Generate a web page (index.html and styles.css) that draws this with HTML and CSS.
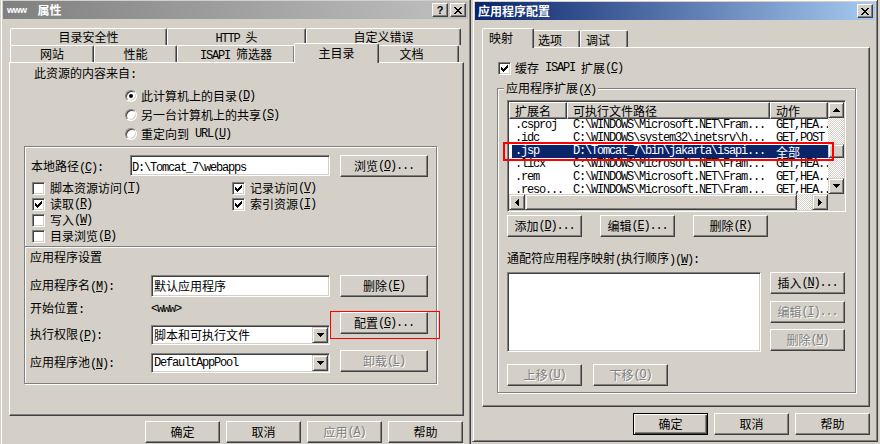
FILE: index.html
```html
<!DOCTYPE html>
<html lang="zh-CN">
<head>
<meta charset="utf-8">
<title>属性 / 应用程序配置</title>
<link rel="stylesheet" href="styles.css">
</head>
<body>
<div class="desk">

  <section class="win win-l">
    <header class="title title-off">
      <span class="ttext"><span class="www">www</span>属性</span>
      <span class="tbtns">
        <span class="cap">?</span>
        <span class="cap"><svg width="8" height="7" viewBox="0 0 8 7"><path d="M0 0h2v1h1v1h2V1h1V0h2v1H7v1H6v1H5v1h1v1h1v1h1v1H6V6H5V5H3v1H2v1H0V6h1V5h1V4h1V3H2V2H1V1H0z"/></svg></span>
      </span>
    </header>

    <div class="tabs tabs-l">
      <div class="trow">
        <div class="tab t-sec">目录安全性</div>
        <div class="tab t-http"><span class="m">HTTP </span>头</div>
        <div class="tab t-err">自定义错误</div>
      </div>
      <div class="trow">
        <div class="tab t-site">网站</div>
        <div class="tab t-perf">性能</div>
        <div class="tab t-isapi"><span class="m">ISAPI </span>筛选器</div>
        <div class="tab tab-on t-home">主目录</div>
        <div class="tab t-doc">文档</div>
      </div>
    </div>

    <div class="panel panel-l">
      <div class="src-title">此资源的内容来自<span class="m">:</span></div>
      <div class="radios">
        <div class="radio-row"><span class="radio on"></span>此计算机上的目录<span class="m">(<u>D</u>)</span></div>
        <div class="radio-row"><span class="radio"></span>另一台计算机上的共享<span class="m">(<u>S</u>)</span></div>
        <div class="radio-row"><span class="radio"></span>重定向到<span class="m"> URL(<u>U</u>)</span></div>
      </div>

      <div class="frame frame-l">
        <div class="path-row">
          <span class="lbl-path">本地路径<span class="m">(<u>C</u>):</span></span>
          <span class="field tb-path"><span class="m">D:\Tomcat_7\webapps</span></span>
          <span class="btn btn-wide">浏览<span class="m">(<u>O</u>)...</span></span>
        </div>

        <div class="checks">
          <div class="chk"><span class="cb"></span>脚本资源访问<span class="m">(<u>T</u>)</span></div>
          <div class="chk"><span class="cb"><svg width="9" height="9" viewBox="0 0 9 9"><path d="M1 3h1v1h1v1h1V4h1V3h1V2h1V1h1v3H7v1H6v1H5v1H4v1H3V7H2V6H1z"/></svg></span>记录访问<span class="m">(<u>V</u>)</span></div>
          <div class="chk"><span class="cb"><svg width="9" height="9" viewBox="0 0 9 9"><path d="M1 3h1v1h1v1h1V4h1V3h1V2h1V1h1v3H7v1H6v1H5v1H4v1H3V7H2V6H1z"/></svg></span>读取<span class="m">(<u>R</u>)</span></div>
          <div class="chk"><span class="cb"><svg width="9" height="9" viewBox="0 0 9 9"><path d="M1 3h1v1h1v1h1V4h1V3h1V2h1V1h1v3H7v1H6v1H5v1H4v1H3V7H2V6H1z"/></svg></span>索引资源<span class="m">(<u>I</u>)</span></div>
          <div class="chk"><span class="cb"></span>写入<span class="m">(<u>W</u>)</span></div>
          <div></div>
          <div class="chk"><span class="cb"></span>目录浏览<span class="m">(<u>B</u>)</span></div>
        </div>

        <div class="sep"></div>
        <div class="sect">应用程序设置</div>

        <div class="app">
          <div class="app-l">
            <div class="arow r1"><span class="alb">应用程序名<span class="m">(<u>M</u>):</span></span><span class="field tb-app"><span class="ftxt">默认应用程序</span></span></div>
            <div class="arow r2"><span class="alb">开始位置<span class="m">:</span></span><span class="m">&lt;www&gt;</span></div>
            <div class="arow r3"><span class="alb">执行权限<span class="m">(<u>P</u>):</span></span><span class="field combo"><span class="ftxt">脚本和可执行文件</span><span class="dd"><svg width="7" height="4" viewBox="0 0 7 4"><path d="M0 0h7v1H6v1H5v1H4v1H3V3H2V2H1V1H0z"/></svg></span></span></div>
            <div class="arow r4"><span class="alb">应用程序池<span class="m">(<u>N</u>):</span></span><span class="field combo"><span class="ftxt m">DefaultAppPool</span><span class="dd"><svg width="7" height="4" viewBox="0 0 7 4"><path d="M0 0h7v1H6v1H5v1H4v1H3V3H2V2H1V1H0z"/></svg></span></span></div>
          </div>
          <div class="app-r">
            <span class="btn btn-wide">删除<span class="m">(<u>E</u>)</span></span>
            <span class="btn btn-wide hl b-cfg">配置<span class="m">(<u>G</u>)...</span></span>
            <span class="btn btn-wide off b-unl">卸载<span class="m">(<u>L</u>)</span></span>
          </div>
        </div>
      </div>
    </div>

    <div class="dlg-btns">
      <span class="btn">确定</span>
      <span class="btn">取消</span>
      <span class="btn off">应用<span class="m">(<u>A</u>)</span></span>
      <span class="btn">帮助</span>
    </div>
  </section>

  <section class="win win-r">
    <header class="title title-on">
      <span class="ttext">应用程序配置</span>
      <span class="tbtns">
        <span class="cap"><svg width="8" height="7" viewBox="0 0 8 7"><path d="M0 0h2v1h1v1h2V1h1V0h2v1H7v1H6v1H5v1h1v1h1v1h1v1H6V6H5V5H3v1H2v1H0V6h1V5h1V4h1V3H2V2H1V1H0z"/></svg></span>
      </span>
    </header>

    <div class="tabs tabs-r">
      <div class="trow">
        <div class="tab tab-on">映射</div>
        <div class="tab">选项</div>
        <div class="tab">调试</div>
      </div>
    </div>

    <div class="panel panel-r">
      <div class="chk chk-cache"><span class="cb"><svg width="9" height="9" viewBox="0 0 9 9"><path d="M1 3h1v1h1v1h1V4h1V3h1V2h1V1h1v3H7v1H6v1H5v1H4v1H3V7H2V6H1z"/></svg></span>缓存<span class="m"> ISAPI </span>扩展<span class="m">(<u>C</u>)</span></div>

      <div class="frame frame-r">
        <span class="legend">应用程序扩展<span class="m">(<u>X</u>)</span></span>

        <div class="lv">
          <div class="lv-main">
            <div class="lv-head">
              <span class="hc w1">扩展名</span><span class="hc w2">可执行文件路径</span><span class="hc w3">动作</span>
            </div>
            <div class="lv-row m"><span class="w1">.csproj</span><span class="w2">C:\WINDOWS\Microsoft.NET\Fram...</span><span class="w3">GET,HEA...</span></div>
            <div class="lv-row m"><span class="w1">.idc</span><span class="w2">C:\WINDOWS\system32\inetsrv\h...</span><span class="w3">GET,POST</span></div>
            <div class="lv-row m sel"><span class="w1">.jsp</span><span class="w2">D:\Tomcat_7\bin\jakarta\isapi...</span><span class="w3 cjk">全部</span></div>
            <div class="lv-row m"><span class="w1">.licx</span><span class="w2">C:\WINDOWS\Microsoft.NET\Fram...</span><span class="w3">GET,HEA...</span></div>
            <div class="lv-row m"><span class="w1">.rem</span><span class="w2">C:\WINDOWS\Microsoft.NET\Fram...</span><span class="w3">GET,HEA...</span></div>
            <div class="lv-row m"><span class="w1">.reso...</span><span class="w2">C:\WINDOWS\Microsoft.NET\Fram...</span><span class="w3">GET,HEA...</span></div>
          </div>
          <div class="vs">
            <span class="sbtn"><svg width="7" height="4" viewBox="0 0 7 4"><path d="M3 0h1v1h1v1h1v1h1v1H0V3h1V2h1V1h1z"/></svg></span>
            <span class="track vt1"></span>
            <span class="sbtn thumb-v"></span>
            <span class="track vt2"></span>
            <span class="sbtn"><svg width="7" height="4" viewBox="0 0 7 4"><path d="M0 0h7v1H6v1H5v1H4v1H3V3H2V2H1V1H0z"/></svg></span>
          </div>
          <div class="hs">
            <span class="sbtn"><svg width="4" height="7" viewBox="0 0 4 7"><path d="M3 0h1v7H3V6H2V5H1V4H0V3h1V2h1V1h1z"/></svg></span>
            <span class="sbtn thumb-h"></span>
            <span class="track ht"></span>
            <span class="sbtn"><svg width="4" height="7" viewBox="0 0 4 7"><path d="M0 0h1v1h1v1h1v1h1v1H3v1H2v1H1v1H0z"/></svg></span>
          </div>
          <div class="corner"></div>
          <div class="mark"></div>
        </div>

        <div class="ext-btns">
          <span class="btn">添加<span class="m">(<u>D</u>)...</span></span>
          <span class="btn">编辑<span class="m">(<u>E</u>)...</span></span>
          <span class="btn">删除<span class="m">(<u>R</u>)</span></span>
        </div>

        <div class="wc-label">通配符应用程序映射<span class="m">(</span>执行顺序<span class="m">)(<u>W</u>):</span></div>
        <div class="wc">
          <div class="field wc-list"></div>
          <div class="wc-btns">
            <span class="btn">插入<span class="m">(<u>N</u>)...</span></span>
            <span class="btn off">编辑<span class="m">(<u>I</u>)...</span></span>
            <span class="btn off">删除<span class="m">(<u>M</u>)</span></span>
          </div>
        </div>

        <div class="move-btns">
          <span class="btn off">上移<span class="m">(<u>U</u>)</span></span>
          <span class="btn off">下移<span class="m">(<u>O</u>)</span></span>
        </div>
      </div>
    </div>

    <div class="dlg-btns">
      <span class="btn def">确定</span>
      <span class="btn">取消</span>
      <span class="btn">帮助</span>
    </div>
  </section>

</div>
</body>
</html>
```

FILE: styles.css
```css
* { box-sizing: border-box; }
html, body { margin: 0; padding: 0; }
body {
  width: 880px; height: 444px; overflow: hidden;
  background: #d4d0c8; color: #000;
  font: 12px/14px "Noto Sans CJK SC", "Noto Sans", sans-serif;
}
u { text-decoration: underline; text-underline-offset: 1px; }
.m { font-family: "Liberation Mono", "DejaVu Sans Mono", monospace; font-size: 12px; letter-spacing: -1.2px; white-space: pre; }
.cjk { font-family: "Noto Sans CJK SC", sans-serif; font-size: 12px; letter-spacing: 0; }
svg { display: block; fill: #000; shape-rendering: crispEdges; }

.desk { display: flex; align-items: flex-start; gap: 1px; }

/* window frame */
.win {
  flex: none; background: #d4d0c8; padding: 2px;
  border: 1px solid; border-color: #d4d0c8 #404040 #404040 #d4d0c8;
  box-shadow: inset 1px 1px #fff, inset -1px -1px #808080;
}
.win-l { width: 471px; height: 452px; margin-top: -2px; }
.win-r { width: 406px; height: 443px; margin-top: -1px; }

.title {
  height: 18px; display: flex; align-items: center; justify-content: space-between;
  padding: 0 2px 0 3px; color: #fff; font-weight: 700;
}
.title-off { background: linear-gradient(90deg, #808080, #c0c0c0); }
.title-on { background: linear-gradient(90deg, #0a246a, #a6caf0); }
.ttext { display: flex; align-items: center; }
.www { font: bold 9px/1 "Liberation Sans", sans-serif; letter-spacing: -0.5px; margin: 1px 11px 0 1px; }
.tbtns { display: flex; gap: 2px; }
.cap {
  width: 16px; height: 14px; display: flex; align-items: center; justify-content: center;
  background: #d4d0c8; color: #000; font: bold 11px/1 "Liberation Sans", sans-serif;
  border: 1px solid; border-color: #fff #404040 #404040 #fff; box-shadow: inset -1px -1px #808080;
}

/* tabs */
.tabs-l { padding: 9px 0 0 7px; }
.tabs-r { padding: 10px 0 0 9px; }
.trow { display: flex; height: 17px; }
.tab {
  flex: none; height: 17px; padding-top: 1px; text-align: center; white-space: nowrap;
  background: #d4d0c8; border: 1px solid; border-bottom: 0;
  border-color: #fff #404040 transparent #fff; border-radius: 2px 2px 0 0;
  box-shadow: inset -1px 0 #808080;
}
.tab-on { height: 20px; margin: -2px -1px 0; padding-top: 2px; position: relative; z-index: 1; }
.t-sec { width: 157px; } .t-http { width: 139px; } .t-err { width: 155px; }
.t-site { width: 84px; } .t-perf { width: 83px; } .t-isapi { width: 118px; }
.t-home { width: 85px; } .t-doc { width: 81px; padding-right: 14px; }
.tabs-r .tab { width: 48px; text-align: left; padding: 2px 0 0 5px; }
.tabs-r .tab-on { width: 52px; margin: -2px -2px 0; padding-left: 6px; }

/* panels */
.panel {
  border: 1px solid; border-color: #fff #404040 #404040 #fff;
  box-shadow: inset -1px -1px #808080;
}
.panel-l { width: 455px; height: 354px; margin-left: 6px; }
.panel-r { width: 388px; height: 360px; margin-left: 7px; }

.src-title { margin: 3px 0 0 24px; }
.radios { margin: 4px 0 0 115px; }
.radio-row { height: 19px; display: flex; align-items: center; white-space: nowrap; }
.radio {
  flex: none; width: 12px; height: 12px; border-radius: 50%; background: #fff; margin-right: 4px;
  border: 1px solid; border-color: #808080 #fff #fff #808080;
  box-shadow: inset 1px 1px #404040, inset -1px -1px #d4d0c8;
  display: flex; align-items: center; justify-content: center;
}
.radio.on::after { content: ""; width: 4px; height: 4px; border-radius: 50%; background: #000; }

/* etched frames */
.frame { border: 1px solid #808080; box-shadow: inset 1px 1px #fff, 1px 1px #fff; }
.frame-l { width: 413px; height: 238px; margin: 3px 0 0 14px; padding: 8px 0 0 6px; }
.frame-r { width: 359px; height: 305px; margin: 13px 0 0 14px; }

/* fields */
.field {
  display: block; background: #fff; padding: 1px;
  border: 1px solid; border-color: #808080 #fff #fff #808080;
  box-shadow: inset 1px 1px #404040, inset -1px -1px #d4d0c8;
}
.ftxt { padding-left: 1px; white-space: nowrap; }

.path-row { display: flex; align-items: flex-start; height: 22px; }
.lbl-path { width: 99px; line-height: 22px; }
.tb-path { width: 200px; height: 21px; line-height: 17px; }
.path-row .btn { margin-left: 10px; }

.checks { display: grid; grid-template-columns: 200px 200px; grid-auto-rows: 16px; margin: 3px 0 0 1px; }
.chk { display: flex; align-items: center; white-space: nowrap; }
.cb {
  flex: none; width: 13px; height: 13px; padding: 1px; background: #fff; margin-right: 5px;
  border: 1px solid; border-color: #808080 #fff #fff #808080;
  box-shadow: inset 1px 1px #404040, inset -1px -1px #d4d0c8;
}

.sep { width: 411px; height: 2px; margin: 2px 0 0 -6px; border-top: 1px solid #808080; border-bottom: 1px solid #fff; }
.sect { margin: 2px 0 0 -1px; }

.app { display: flex; margin: 11px 0 0 -1px; }
.app-l { width: 300px; display: flex; flex-direction: column; }
.arow { display: flex; align-items: center; height: 20px; }
.alb { width: 121px; flex: none; white-space: nowrap; }
.r1 { height: 22px; }
.r2 { margin-top: 2px; }
.r3 { margin-top: 6px; }
.r4 { margin-top: 8px; }
.tb-app { width: 179px; height: 22px; line-height: 17px; }
.combo { width: 179px; height: 20px; display: flex; align-items: center; }
.dd {
  margin-left: auto; width: 16px; height: 16px; display: flex; align-items: center; justify-content: center;
  background: #d4d0c8; border: 1px solid; border-color: #d4d0c8 #404040 #404040 #d4d0c8;
  box-shadow: inset 1px 1px #fff, inset -1px -1px #808080;
}
.app-r { display: flex; flex-direction: column; margin-left: 10px; }
.b-cfg { margin-top: 15px; }
.b-unl { margin-top: 16px; }

/* buttons */
.btn {
  flex: none; width: 75px; height: 22px; display: flex; align-items: center; justify-content: center;
  white-space: nowrap; background: #d4d0c8;
  border: 1px solid; border-color: #fff #404040 #404040 #fff;
  box-shadow: inset -1px -1px #808080;
}
.btn-wide { width: 88px; }
.btn.off { color: #808080; text-shadow: 1px 1px #fff; }
.btn.def { border-color: #000; box-shadow: inset 1px 1px #fff, inset -1px -1px #404040, inset -2px -2px #808080; }
.hl { position: relative; }
.hl::after { content: ""; position: absolute; left: -11px; top: -2px; width: 108px; height: 26px; border: 1px solid #f00; }

.dlg-btns { display: flex; justify-content: flex-end; gap: 6px; margin-top: 5px; padding-right: 5px; }
.win-r .dlg-btns { margin-top: 6px; }

/* right dialog */
.chk-cache { height: 14px; margin: 13px 0 0 15px; }
.chk-cache .cb { margin-right: 4px; }
.legend { display: block; width: max-content; margin: -8px 0 0 6px; padding: 0 2px; background: #d4d0c8; }

.lv {
  position: relative; width: 339px; height: 112px; margin: 3px 0 0 9px; padding: 1px;
  display: grid; grid-template-columns: 319px 16px; grid-template-rows: 92px 16px;
  background: #fff; border: 1px solid; border-color: #808080 #fff #fff #808080;
  box-shadow: inset 1px 1px #404040, inset -1px -1px #d4d0c8;
}
.lv-main { overflow: hidden; }
.lv-head { display: flex; height: 17px; }
.hc {
  flex: none; height: 17px; padding: 1px 0 0 5px; white-space: nowrap; overflow: hidden;
  background: #d4d0c8; border: 1px solid; border-color: #fff #404040 #404040 #fff;
  box-shadow: inset -1px -1px #808080;
}
.w1 { width: 58px; } .w2 { width: 203px; } .w3 { width: 58px; }
.lv-row { display: flex; height: 13px; line-height: 13px; white-space: nowrap; }
.lv-row span { flex: none; overflow: hidden; padding-left: 6px; }
.lv-row.sel { color: #fff; background: linear-gradient(90deg, transparent 3px, #0a246a 3px); }

.vs { display: flex; flex-direction: column; }
.hs { display: flex; }
.sbtn {
  flex: none; width: 16px; height: 16px; display: flex; align-items: center; justify-content: center;
  background: #d4d0c8; border: 1px solid; border-color: #d4d0c8 #404040 #404040 #d4d0c8;
  box-shadow: inset 1px 1px #fff, inset -1px -1px #808080;
}
.thumb-v { height: 14px; }
.thumb-h { width: 272px; }
.track {
  flex: none; background-color: #fff;
  background-image: conic-gradient(#d4d0c8 25%, #fff 0 50%, #d4d0c8 0 75%, #fff 0);
  background-size: 2px 2px;
}
.vt1 { height: 26px; } .vt2 { height: 20px; }
.ht { width: 15px; }
.corner { background: #d4d0c8; }
.mark { position: absolute; left: -5px; top: 41px; width: 331px; height: 19px; border: 2px solid #f00; }

.ext-btns { display: flex; gap: 18px; margin: 3px 0 0 9px; }
.wc-label { margin: 14px 0 0 9px; white-space: nowrap; }
.wc { display: flex; gap: 9px; margin: 5px 0 0 9px; }
.wc-list { width: 254px; height: 80px; }
.wc-btns { display: flex; flex-direction: column; gap: 7px; }
.wc-btns .btn:last-child { margin-top: -1px; }
.move-btns { display: flex; gap: 11px; margin: 12px 0 0 9px; }
```
